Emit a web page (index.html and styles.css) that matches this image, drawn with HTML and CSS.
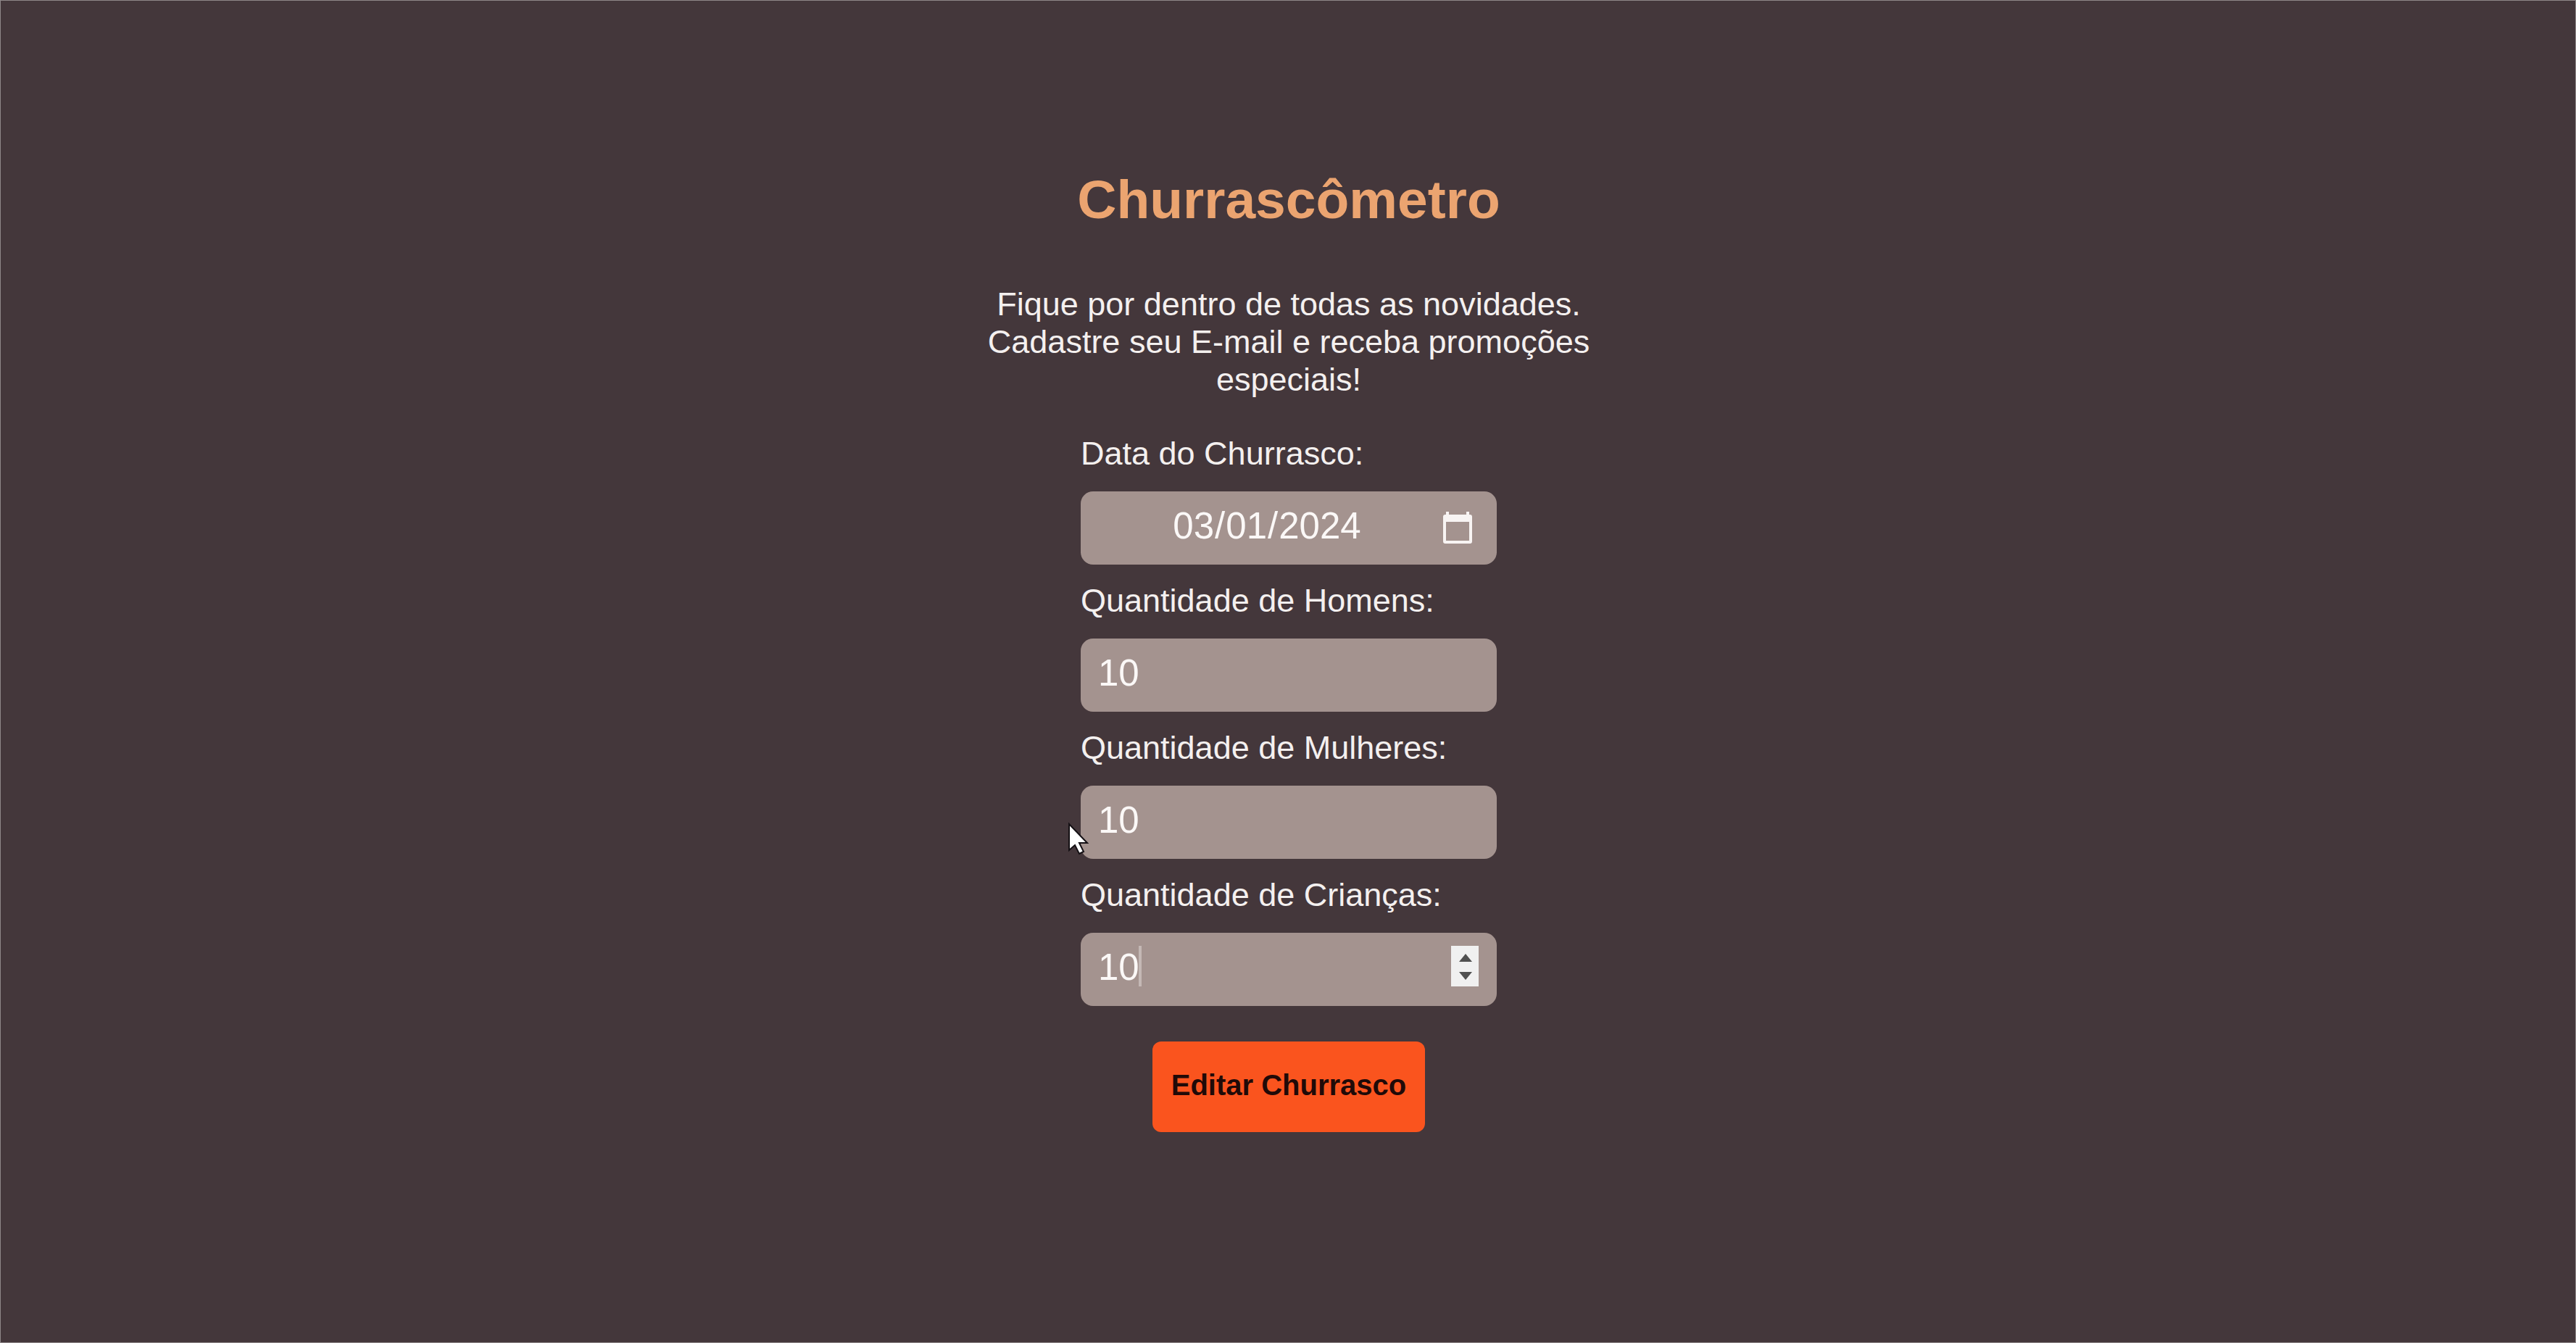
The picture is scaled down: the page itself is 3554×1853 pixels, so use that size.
FILE: index.html
```html
<!DOCTYPE html>
<html lang="pt-BR">
<head>
  <meta charset="utf-8">
  <title>Churrascômetro</title>
  <link rel="stylesheet" href="styles.css">
</head>
<body>
  <main class="page">
    <h1 class="title">Churrascômetro</h1>
    <p class="intro">Fique por dentro de todas as novidades. Cadastre seu E-mail e receba promoções especiais!</p>
    <form class="form">
      <div class="field">
        <label class="label" for="data">Data do Churrasco:</label>
        <div class="control">
          <input class="input input-date" type="date" id="data" value="2024-03-01">
          <svg class="calendar" viewBox="0 0 42 46" aria-hidden="true">
            <path fill="#f8f4f3" fill-rule="evenodd" d="M5 1h4v4h24V1h4v4h1q3 0 3 3v34q0 3-3 3H4q-3 0-3-3V8q0-3 3-3h1zM5 15v26h32V15z"/>
          </svg>
        </div>
      </div>
      <div class="field">
        <label class="label" for="homens">Quantidade de Homens:</label>
        <div class="control">
          <input class="input" type="number" id="homens" value="10">
        </div>
      </div>
      <div class="field">
        <label class="label" for="mulheres">Quantidade de Mulheres:</label>
        <div class="control">
          <input class="input" type="number" id="mulheres" value="10">
          <svg class="pointer" viewBox="0 0 30 46" aria-hidden="true">
            <path fill="#fff" stroke="#141014" stroke-width="2" d="M2 3v36l8-7 6 12 6-3-6-12h11z"/>
          </svg>
        </div>
      </div>
      <div class="field">
        <label class="label" for="criancas">Quantidade de Crianças:</label>
        <div class="control">
          <input class="input" type="number" id="criancas" value="10">
          <span class="caret"></span>
          <svg class="spinner" viewBox="0 0 38 56" aria-hidden="true">
            <path fill="#f0f0f0" d="M0 0h38v56H0z"/>
            <path fill="#505050" d="M11 22h18l-9-11zM11 36h18l-9 11z"/>
          </svg>
        </div>
      </div>
      <button class="submit" type="button">Editar Churrasco</button>
    </form>
  </main>
</body>
</html>
```
FILE: styles.css
```css
* {
  box-sizing: border-box;
}

body {
  margin: 0;
  background: #44373b;
  color: #f4f0ef;
  font-family: "Liberation Sans", Arial, sans-serif;
}

.page {
  display: flex;
  flex-direction: column;
  align-items: center;
  min-height: 100vh;
  padding: 230px 24px 64px 26px;
  border: 1px solid #8f8789;
}

.title {
  margin: 0 0 75px;
  color: #eba470;
  font-size: 75px;
  line-height: 88px;
}

.intro {
  max-width: 880px;
  margin: 0 0 50px;
  font-size: 45px;
  line-height: 52px;
  text-align: center;
}

.form {
  display: flex;
  flex-direction: column;
  align-items: center;
  width: 100%;
  max-width: 574px;
}

.field {
  width: 100%;
  margin-bottom: 24px;
}

.label {
  display: block;
  margin-bottom: 26px;
  font-size: 45px;
  line-height: 52px;
}

.control {
  position: relative;
}

.input {
  display: block;
  width: 100%;
  height: 101px;
  margin: 0;
  padding: 0 24px 6px;
  border: 0;
  border-radius: 17px;
  outline: 0;
  background: #a4938f;
  color: #fbf8f7;
  font-family: inherit;
  font-size: 51px;
  appearance: textfield;
}

.input::-webkit-inner-spin-button {
  appearance: none;
  margin: 0;
}

.input-date {
  text-align: center;
}

.input-date::-webkit-date-and-time-value {
  text-align: center;
}

.input-date::-webkit-calendar-picker-indicator {
  width: 40px;
  height: 46px;
  margin: 0 0 0 20px;
  padding: 0;
  opacity: 0;
}

.calendar {
  position: absolute;
  top: 27px;
  right: 33px;
  width: 42px;
  height: 46px;
  pointer-events: none;
}

.spinner {
  position: absolute;
  top: 18px;
  right: 25px;
  width: 38px;
  height: 56px;
}

.caret {
  position: absolute;
  top: 18px;
  left: 80px;
  width: 4px;
  height: 56px;
  background: #c4b8b5;
}

.pointer {
  position: absolute;
  top: 50px;
  left: -18px;
  width: 30px;
  height: 46px;
}

.submit {
  margin: 25px 0 0;
  padding: 37px 26px 42px;
  border: 0;
  border-radius: 12px;
  background: #fa541e;
  color: #200a08;
  font-family: inherit;
  font-size: 40px;
  font-weight: bold;
  line-height: 46px;
}
```
